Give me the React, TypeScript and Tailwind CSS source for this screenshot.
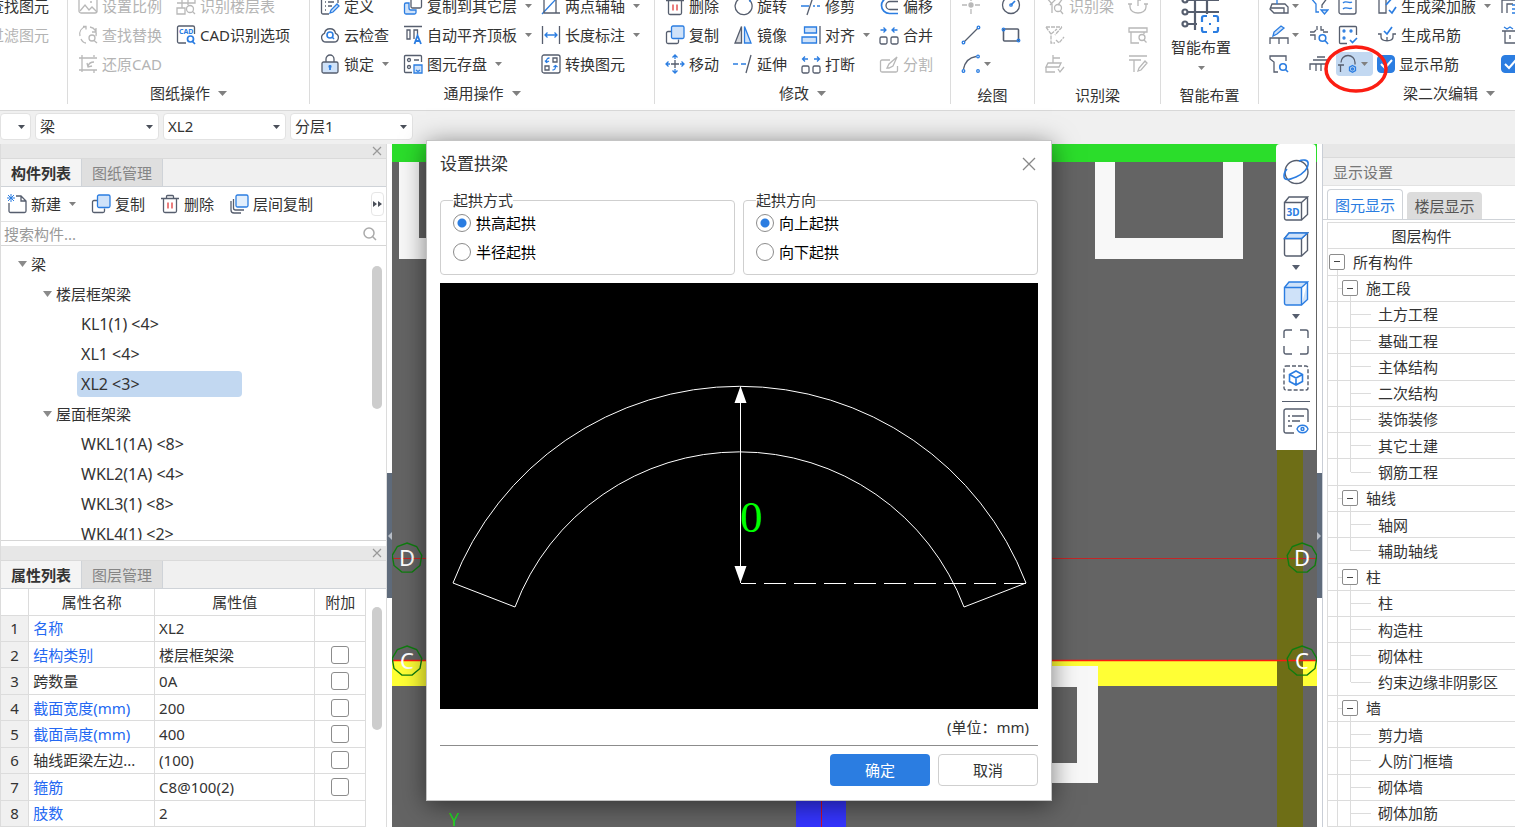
import React, { useState } from 'react';
import clsx from 'clsx';

const D = '#565e6e';
const B = '#2b7de1';
const L = '#cfe2f9';

// Every toolbar icon is drawn on a 20x20 grid
const icons: Record<string, React.ReactNode> = {
  scale: <><rect x="1" y="2" width="18" height="15" rx="2" /><path d="M2 15l5-6 4 5 3-3 5 5M12 6h2" /></>,
  floorTable: <><path d="M6 1v6H1M6 7h6V1h7v6h-7M1 12h8v6H1zM6 7v5M12 9V7" /><circle cx="14" cy="13" r="3.5" /><path d="M16.500 15.500L19 18" /></>,
  replace: <><path d="M8 1.500C3 3 1 7 2 11M3 14c1 2 3 4 5 4M12 2c5 1 7 5 6 9M5 1.500h3v3M18 3v4h-4" /><circle cx="14" cy="13" r="3" /><path d="M16 15.500L19 18" /></>,
  cadOption: <><path d="M10 18H3a1.500 1.500 0 0 1-1.500-1.500v-14A1.500 1.500 0 0 1 3 1h14a1.500 1.500 0 0 1 1.500 1.500V9" /><text x="3" y="9" fontSize="7" fontWeight="700" fill={B} stroke="none">CAD</text><circle cx="14.500" cy="14" r="3" stroke={B} strokeWidth="1.700" /><path d="M16.500 16.500L19 19" stroke={B} strokeWidth="1.700" /></>,
  restore: <path d="M1 4h18M4 1v17M1 16h18M16 1v2M16 16v3M16 8c-3 0-5 1-6 4M9 9l1 4 4-1" />,
  define: <><path d="M9 18H3a1.500 1.500 0 0 1-1.500-1.500V2M18 2v5M5 6h1M8 6h6M5 10h1M8 10h4M5 14h1" /><path d="M10 17l1-3 6-6 2 2-6 6z" stroke={B} fill={L} /></>,
  cloud: <><path d="M6 17a4.500 4.500 0 0 1-1.500-8.700 5.600 5.600 0 0 1 11 0A4.500 4.500 0 0 1 14 17z" /><circle cx="10" cy="10" r="3" stroke={B} strokeWidth="1.600" /><path d="M12 12l2 2" stroke={B} strokeWidth="1.600" /></>,
  lock: <><path d="M6 8V5a4 4 0 0 1 8 0v3" /><rect x="2" y="8" width="16" height="11" rx="1.500" fill={L} /><path d="M10 11v5M8.500 12.500h3" stroke={B} strokeWidth="1.800" /></>,
  copyLayer: <><rect x="8" y="1" width="10.500" height="11" rx="1.500" /><path d="M6 7H3a1.500 1.500 0 0 0-1.500 1.500v8A1.500 1.500 0 0 0 3 18h8.500a1.500 1.500 0 0 0 1.500-1.500V14H8a2 2 0 0 1-2-2z" fill={L} stroke={B} /></>,
  alignTop: <><path d="M1 1.500h18M4 5h3v9H4zM11 14V5h3.500v5" /><path d="M11.500 19l3-8.500L18 19M12.500 16h4.500" stroke={B} strokeWidth="1.800" /></>,
  save: <><path d="M9 18.500H2.500a1 1 0 0 1-1-1v-15a1 1 0 0 1 1-1h15a1 1 0 0 1 1 1V8M11 6h5M11 12h0" /><circle cx="6" cy="6" r="1.500" /><circle cx="6" cy="13" r="1.500" /><path d="M11 11h8v8h-8zM13 16l2 1.500 2-1.500" stroke={B} fill={L} /></>,
  twoPoint: <><path d="M1 18L16 2" stroke={B} /><path d="M3 1v16h16M15 1v16" /></>,
  length: <><path d="M1.500 1v18M18.500 1v18" /><path d="M4 10h12M6.500 7.500L4 10l2.500 2.500M13.500 7.500L16 10l-2.500 2.500" stroke={B} /></>,
  convert: <><rect x="1" y="1" width="18" height="18" rx="2" /><path d="M12 4h4v4h-4zM4 12h4v4H4z" /><path d="M8.500 4C6 4 5.500 5 5.500 8M4 6.500L5.500 8.500 8 7M11.500 16c2.500 0 3-1 3-4M12.500 13l2-1.500L16.500 13" stroke={B} /></>,
  trash: <><path d="M1 4.500h18M6.500 4.500V2.500a1 1 0 0 1 1-1h5a1 1 0 0 1 1 1v2M3.500 4.500V17A1.500 1.500 0 0 0 5 18.500h10a1.500 1.500 0 0 0 1.500-1.500V4.500" /><path d="M8 8.500v6M12 8.500v6" stroke="#e03a3a" /></>,
  copy: <><path d="M6 6.500H3A1.500 1.500 0 0 0 1.500 8v9A1.500 1.500 0 0 0 3 18.500h9a1.500 1.500 0 0 0 1.500-1.500v-2.500" /><rect x="6.500" y="1" width="12.500" height="12.500" rx="1.500" fill={L} stroke={B} /></>,
  move: <><path d="M10 6v8M6 10h8" /><path d="M7.500 3.500L10 1l2.500 2.500M10 1v4M7.500 16.500L10 19l2.500-2.500M10 19v-4M3.500 7.500L1 10l2.500 2.500M1 10h4M16.500 7.500L19 10l-2.500 2.500M19 10h-4" stroke={B} /></>,
  rotate: <><path d="M13 2a8.500 8.500 0 1 1-7 1" /><path d="M13 2h4v4" stroke={B} /></>,
  mirror: <><path d="M8.500 1.500V18H2z" fill="#d8dade" /><path d="M11.500 1.500V18H18z" fill={L} stroke={B} /></>,
  extend: <><path d="M13 19l5-18" /><path d="M0 10h5M8 10h5" stroke={B} strokeWidth="1.600" /></>,
  trim: <><path d="M6 19l6-18" /><path d="M0 10h8M12 10h2M16 10h3" stroke={B} strokeWidth="1.600" /></>,
  align: <><path d="M19 1v18" /><path d="M3.500 2h12v6h-12zM1 12h14.500v6H1z" fill={L} stroke={B} /></>,
  breakIt: <><rect x="1" y="12" width="7" height="7" rx="1.500" /><rect x="12" y="12" width="7" height="7" rx="1.500" /><path d="M7 5H2M4 2.500L1.500 5 4 7.500M13 5h5M16 2.500L18.500 5 16 7.500" stroke={B} /></>,
  merge: <><rect x="1" y="12" width="7" height="7" rx="1.500" /><rect x="12" y="12" width="7" height="7" rx="1.500" /><path d="M1.500 5H7M4.500 2.500L7 5 4.500 7.500M18.500 5H13M15.500 2.500L13 5l2.500 2.500" stroke={B} /></>,
  offset: <><path d="M19 1.500h-8.500a8 8 0 0 0 0 16H19" stroke={B} strokeWidth="1.700" /><path d="M19 5.500h-8a4 4 0 0 0 0 8h8" /></>,
  split: <><path d="M11 6H3a1.500 1.500 0 0 0-1.500 1.500v9A1.500 1.500 0 0 0 3 18h14a1.500 1.500 0 0 0 1.500-1.500V12M8 14l2-4 8-7-4 9-4 2z" /></>,
  point: <><path d="M1 9h5M14 9h5M10 1v4M10 13v5" /><circle cx="10" cy="9" r="2" fill="#b8b8b8" /></>,
  circle: <><circle cx="10" cy="9" r="8.500" /><path d="M10 9l4-4" stroke={B} strokeWidth="1.700" /><circle cx="10" cy="9" r="1.200" stroke={B} /></>,
  line: <><path d="M3 17L17 3" /><circle cx="2.500" cy="17.500" r="1.300" stroke={B} /><circle cx="17.500" cy="2.500" r="1.300" stroke={B} /></>,
  rect: <><rect x="2.500" y="4" width="15" height="12" rx="1" strokeWidth="1.600" /><circle cx="2.500" cy="4.500" r="1.300" stroke={B} /><circle cx="17.500" cy="15.500" r="1.300" stroke={B} /></>,
  arc: <><path d="M2.500 15C4 8 8 3.500 15 2.500" /><circle cx="2.500" cy="17" r="1.300" stroke={B} /><circle cx="17" cy="2.500" r="1.300" stroke={B} /><circle cx="17" cy="17" r="1.300" stroke={B} /></>,
  beamFind: <><path d="M1 1l6 7v9M6 2h12l-5 7v0M5 9l7-7" /><circle cx="13" cy="12" r="3.500" /><path d="M15.500 15L18 18" /></>,
  beamCheck: <><path d="M1 2h16M1 2l5 7v9h4M17 2l-7 8M6 9l6-5M11 15l3 3 5-6" strokeDasharray="4 1" /></>,
  beamStack: <><path d="M8 1v8M8 4h7M3 9h13l-2 4H1zM1 13v5h9M13 15l2 3 4-5" /></>,
  hook: <><path d="M10 1v9M10 4h3M2 8v3c0 8 16 8 16 0V8M0 8h4M16 8h4" /></>,
  panelFind: <><path d="M1 3h18v4H1zM3 7v11h8M16 7v2" /><circle cx="14" cy="12.500" r="3" /><path d="M16 15l2.500 2.500" /></>,
  panelEdit: <><path d="M1 2h18M1 6h12M6 6v12M10 17l1-3 6-7 2 2-6 7z" /></>,
  box: <><path d="M3 8h13l3 3v6H5l-4-4zM2 12h13v5" /><path d="M8 8V1h7" stroke={B} /></>,
  pencilFrame: <><path d="M1 19v-6h18v6M10 13v6" /><path d="M4 11l1-4 7-6 3 2-7 6z" stroke={B} fill={L} /></>,
  pipeFind: <><path d="M17 7V2H1v3l4 3v10h4" /><circle cx="14" cy="13" r="3.300" stroke={B} strokeWidth="1.600" /><path d="M16.500 15.500L19 18" stroke={B} strokeWidth="1.600" /></>,
  funnel: <><path d="M1 1l6 7v8h3" stroke={B} /><path d="M8 1h11l-6 8v3" /><path d="M12 14h7l-3.500 4z" stroke={B} fill={L} /></>,
  cross: <><path d="M1 7h4l2-2M1 10h5v5M8 1v4M12 1v4h3M19 7h-5" /><circle cx="13.500" cy="13" r="3.300" stroke={B} strokeWidth="1.600" /><path d="M16 15.500L19 19" stroke={B} strokeWidth="1.600" /></>,
  roof: <path d="M4 6h15M1 16v-6h18M8 3h8M7 10v7M12 10v7" />,
  waves: <><rect x="1" y="1" width="17" height="17" rx="2" /><path d="M5 7c3-3 6 1 9-1M5 13c3-3 6 1 9-1" stroke={B} /></>,
  dots: <><path d="M9 18.500H2.500a1 1 0 0 1-1-1v-15a1 1 0 0 1 1-1h15a1 1 0 0 1 1 1V10" /><circle cx="6" cy="6" r="1" stroke={B} /><circle cx="13" cy="6" r="1" stroke={B} /><circle cx="6" cy="13" r="1" stroke={B} /><path d="M12 15l2.500 2.500L19 13" stroke={B} strokeWidth="1.700" /></>,
  archBeam: <><path d="M4 8.500a7 7 0 0 1 14 0v2M1 11h6M3.500 11v7" /><path d="M15.500 11.500l3 1.700v3.400l-3 1.700-3-1.700v-3.400z" stroke={B} /><circle cx="15.500" cy="15" r="1" stroke={B} /></>,
  haunch: <><path d="M1 1h16M2 1v16h7V1" /><path d="M9 9l7-8M12 14l3 3 4-6" stroke={B} strokeWidth="1.700" /></>,
  hanger: <><path d="M1 9h3v3c0 5 12 5 12 0V9h3M10 12v4" /><path d="M7 6l3 3 5-7" stroke={B} strokeWidth="1.700" /></>,
  frame: <><path d="M1 17V4h18M6 17V8h6" /><path d="M11 9h8M11 13h8M11 17h8" stroke={B} /></>,
  comb: <><path d="M1 6h18M4 6v12h10M9 10v4" /><path d="M3 2l3 2 3-2 3 2" stroke={B} /></>,
  newDoc: <><path d="M9 2h5l5 5v10a1.500 1.500 0 0 1-1.500 1.500h-14A1.500 1.500 0 0 1 2 17V9M14 2v5h5" /><path d="M1 1l6 6M7 1L1 7M4 0v8M0 4h8" stroke={B} strokeWidth="1" /></>,
  layers: <><path d="M2 7v9a3 3 0 0 0 3 3h7M4.500 5v9a2 2 0 0 0 2 2H15" /><rect x="7" y="1" width="12" height="12" rx="1.500" fill="#e3effc" stroke={B} /></>,
};

const Icon = ({ name, muted }: { name: string; muted?: boolean }) => (
  <svg
    width="20"
    height="20"
    viewBox="0 0 20 20"
    fill="none"
    stroke={muted ? '#b8b8b8' : D}
    strokeWidth="1.3"
    className="shrink-0"
  >
    {icons[name]}
  </svg>
);

const Caret = ({ className = 'text-[#808080]' }: { className?: string }) => (
  <svg width="7" height="4" viewBox="0 0 7 4" className={clsx('shrink-0', className)}>
    <path d="M0 0h7L3.500 4z" fill="currentColor" />
  </svg>
);

type ToolProps = { icon: string; label?: string; arrow?: boolean; muted?: boolean; title?: string };

const Tool = ({ icon, label, arrow, muted, title }: ToolProps) => (
  <button
    type="button"
    aria-label={label ?? title ?? icon}
    className={clsx(
      'flex h-[29px] items-center whitespace-nowrap hover:bg-[#eef4fc]',
      label ? 'gap-1' : 'gap-[3px]',
      muted ? 'text-[#b4b4b4]' : 'text-[#333]'
    )}
  >
    <Icon name={icon} muted={muted} />
    {label}
    {arrow && <span className={label ? 'pl-1' : ''}><Caret /></span>}
  </button>
);

const Group = ({ title, arrow, className, children }: { title?: string; arrow?: boolean; className: string; children: React.ReactNode }) => (
  <section className={clsx('flex shrink-0 flex-col justify-end', className)}>
    <div className="flex shrink-0 items-end pl-[10px]">{children}</div>
    <div className={clsx('flex h-[30px] shrink-0 items-center justify-center gap-2', title && !arrow && 'pt-1')}>
      {title}
      {arrow && (
        <svg width="9" height="5" viewBox="0 0 9 5"><path d="M0 0h9L4.500 5z" fill="#808080" /></svg>
      )}
    </div>
  </section>
);

const Divider = () => <div className="mb-1 w-px shrink-0 bg-[#dcdcdc]" />;

const Column = ({ tools, className }: { tools: ToolProps[]; className?: string }) => (
  <div className={clsx('flex shrink-0 flex-col items-start', className)}>
    {tools.map((t, i) => <Tool key={i} {...t} />)}
  </div>
);

const BlueCheck = ({ label, title }: { label?: string; title?: string }) => {
  const [on, setOn] = useState(true);
  return (
    <label className="flex h-[29px] items-center gap-1 whitespace-nowrap">
      <span className="grid shrink-0">
        <input
          type="checkbox"
          aria-label={title}
          checked={on}
          onChange={() => setOn(!on)}
          className="col-start-1 row-start-1 size-[18px] appearance-none rounded-sm border border-[#2b7de1] checked:bg-[#2b7de1]"
        />
        <svg viewBox="0 0 18 18" className="pointer-events-none col-start-1 row-start-1 size-[18px]">
          <path d="M4 9l4 4 7-8" fill="none" stroke="#fff" strokeWidth="2" />
        </svg>
      </span>
      {label}
    </label>
  );
};

const Ribbon = () => (
  <header className="flex h-[111px] shrink-0 overflow-hidden border-b border-[#d8d8d8] bg-white pb-[2px]">
    <Group className="w-[67px]">
      <div className="flex w-full flex-col items-end pr-[18px] pb-[29px]">
        <button type="button" className="h-[29px] whitespace-nowrap">查找图元</button>
        <button type="button" className="h-[29px] whitespace-nowrap text-[#b4b4b4]">过滤图元</button>
      </div>
    </Group>
    <Divider />
    <Group title="图纸操作" arrow className="w-[241px]">
      <Column
        className="w-[98px]"
        tools={[
          { icon: 'scale', label: '设置比例', muted: true },
          { icon: 'replace', label: '查找替换', muted: true },
          { icon: 'restore', label: '还原CAD', muted: true },
        ]}
      />
      <Column
        className="pb-[29px]"
        tools={[
          { icon: 'floorTable', label: '识别楼层表', muted: true },
          { icon: 'cadOption', label: 'CAD识别选项' },
        ]}
      />
    </Group>
    <Divider />
    <Group title="通用操作" arrow className="w-[344px]">
      <Column
        className="w-[83px]"
        tools={[
          { icon: 'define', label: '定义' },
          { icon: 'cloud', label: '云检查' },
          { icon: 'lock', label: '锁定', arrow: true },
        ]}
      />
      <Column
        className="w-[138px]"
        tools={[
          { icon: 'copyLayer', label: '复制到其它层', arrow: true },
          { icon: 'alignTop', label: '自动平齐顶板', arrow: true },
          { icon: 'save', label: '图元存盘', arrow: true },
        ]}
      />
      <Column
        tools={[
          { icon: 'twoPoint', label: '两点辅轴', arrow: true },
          { icon: 'length', label: '长度标注', arrow: true },
          { icon: 'convert', label: '转换图元' },
        ]}
      />
    </Group>
    <Divider />
    <Group title="修改" arrow className="w-[295px]">
      <Column
        className="w-[68px]"
        tools={[
          { icon: 'trash', label: '删除' },
          { icon: 'copy', label: '复制' },
          { icon: 'move', label: '移动' },
        ]}
      />
      <Column
        className="w-[68px]"
        tools={[
          { icon: 'rotate', label: '旋转' },
          { icon: 'mirror', label: '镜像' },
          { icon: 'extend', label: '延伸' },
        ]}
      />
      <Column
        className="w-[78px]"
        tools={[
          { icon: 'trim', label: '修剪' },
          { icon: 'align', label: '对齐', arrow: true },
          { icon: 'breakIt', label: '打断' },
        ]}
      />
      <Column
        tools={[
          { icon: 'offset', label: '偏移' },
          { icon: 'merge', label: '合并' },
          { icon: 'split', label: '分割', muted: true },
        ]}
      />
    </Group>
    <Divider />
    <Group title="绘图" className="w-[83px]">
      <Column
        className="w-10"
        tools={[
          { icon: 'point', title: '点', muted: true },
          { icon: 'line', title: '直线' },
          { icon: 'arc', title: '弧线', arrow: true },
        ]}
      />
      <Column
        className="pb-[29px]"
        tools={[
          { icon: 'circle', title: '圆' },
          { icon: 'rect', title: '矩形' },
        ]}
      />
    </Group>
    <Divider />
    <Group title="识别梁" className="w-[125px]">
      <Column
        className="w-[83px]"
        tools={[
          { icon: 'beamFind', label: '识别梁', muted: true },
          { icon: 'beamCheck', title: '校核梁图元', muted: true },
          { icon: 'beamStack', title: '编辑支座', muted: true },
        ]}
      />
      <Column
        tools={[
          { icon: 'hook', title: '识别吊筋', muted: true },
          { icon: 'panelFind', title: '校核原位标注', muted: true },
          { icon: 'panelEdit', title: '识别原位标注', muted: true },
        ]}
      />
    </Group>
    <Divider />
    <Group title="智能布置" className="w-[97px]">
      <button type="button" className="flex flex-col items-center pb-2">
        <svg width="40" height="40" viewBox="0 0 40 40" fill="none" stroke={D} strokeWidth="2.200">
          <path d="M6 6h32M6 18h32M6 30h10M14 0v36M26 0v20M36 0v6" />
          <circle cx="4" cy="6" r="2.500" />
          <circle cx="4" cy="18" r="2.500" />
          <circle cx="4" cy="30" r="2.500" />
          <path d="M21 28v-4a2 2 0 0 1 2-2h3M32 22h3a2 2 0 0 1 2 2v4M37 33v3a2 2 0 0 1-2 2h-3M26 38h-3a2 2 0 0 1-2-2v-3M28 30h2" stroke={B} />
        </svg>
        <span className="h-8 leading-[26px]">智能布置</span>
        <Caret />
      </button>
    </Group>
    <Divider />
    <Group title="梁二次编辑" arrow className="w-[380px]">
      <Column
        className="w-10"
        tools={[
          { icon: 'box', title: '重提梁跨', arrow: true },
          { icon: 'pencilFrame', title: '原位标注', arrow: true },
          { icon: 'pipeFind', title: '查改标高' },
        ]}
      />
      <Column
        className="w-[27px]"
        tools={[
          { icon: 'funnel', title: '应用同名梁' },
          { icon: 'cross', title: '校核' },
          { icon: 'roof', title: '梁跨分类' },
        ]}
      />
      <div className="relative w-[41px] shrink-0">
        <div className="flex flex-col items-start pl-[2px]">
          <Tool icon="waves" title="刷新支座" />
          <Tool icon="dots" title="查改" />
        </div>
        <div className="flex h-[29px] items-center">
          <button type="button" aria-label="设置拱梁" className="flex h-6 w-[37px] items-center gap-1 rounded-sm bg-[#c2d8f1] pl-px">
            <Icon name="archBeam" />
            <Caret />
          </button>
        </div>
        <svg width="66" height="50" viewBox="0 0 66 50" className="pointer-events-none absolute -right-3 -bottom-4">
          <ellipse cx="33" cy="25" rx="30" ry="22" fill="none" stroke="#fb1d12" strokeWidth="3.500" />
        </svg>
      </div>
      <div className="flex w-[124px] shrink-0 flex-col items-start">
        <Tool icon="haunch" label="生成梁加腋" arrow />
        <Tool icon="hanger" label="生成吊筋" />
        <BlueCheck label="显示吊筋" />
      </div>
      <div className="flex shrink-0 flex-col items-start">
        <Tool icon="frame" title="生成架立筋" />
        <Tool icon="comb" title="生成侧面筋" />
        <BlueCheck title="显示加腋" />
      </div>
    </Group>
  </header>
);

const Picker = ({ label, value, className }: { label: string; value: string; className: string }) => (
  <div className={clsx('relative shrink-0', className)}>
    <select aria-label={label} className="h-[27px] w-full appearance-none rounded border border-[#e2e2e2] bg-white pb-px pl-1 outline-none">
      <option>{value}</option>
    </select>
    <span className="pointer-events-none absolute top-3 right-[6px]"><Caret className="text-[#4a4f59]" /></span>
  </div>
);

const PanelStrip = () => (
  <div className="flex h-[15px] shrink-0 items-center justify-end border-b border-[#dadada] bg-[#e7e7e7] pr-1">
    <button type="button" aria-label="关闭">
      <svg width="10" height="10" viewBox="0 0 10 10"><path d="M1 1l8 8M9 1L1 9" stroke="#999" strokeWidth="1.200" /></svg>
    </button>
  </div>
);

const PanelTabs = ({ tabs }: { tabs: string[] }) => (
  <div role="tablist" className="flex h-7 shrink-0 border-b border-[#cfd3d8] bg-[#f0f0f0]">
    {tabs.map((tab, i) => (
      <button
        key={tab}
        type="button"
        role="tab"
        aria-selected={i === 0}
        className={clsx(
          'w-[81px] border-r border-[#cfd3d8]',
          i === 0 ? 'bg-[#f4f4f4] font-bold text-[#333]' : 'bg-[#dfdfdf] text-[#858585]'
        )}
      >
        {tab}
      </button>
    ))}
  </div>
);

const components = [
  { name: '楼层框架梁', items: ['KL1(1) <4>', 'XL1 <4>', 'XL2 <3>'] },
  { name: '屋面框架梁', items: ['WKL1(1A) <8>', 'WKL2(1A) <4>', 'WKL3(1) <8>', 'WKL4(1) <2>'] },
];

const TreeCaret = () => (
  <svg width="9" height="6" viewBox="0 0 9 6"><path d="M0 0h9L4.500 6z" fill="#8a8a8a" /></svg>
);

const ComponentPanel = () => {
  const [selected, setSelected] = useState('XL2 <3>');
  return (
    <section className="flex min-h-0 flex-[400] flex-col pb-[5px]">
      <PanelStrip />
      <PanelTabs tabs={['构件列表', '图纸管理']} />
      <div className="flex h-[35px] shrink-0 items-center gap-[15px] border-b border-[#e2e2e2] pl-[6px]">
        <Tool icon="newDoc" label="新建" arrow />
        <Tool icon="copy" label="复制" />
        <Tool icon="trash" label="删除" />
        <Tool icon="layers" label="层间复制" />
        <button type="button" aria-label="更多" className="mr-[2px] ml-auto flex h-6 w-[13px] items-center justify-center rounded border border-[#e6e6e6]">
          <svg width="9" height="6" viewBox="0 0 9 6"><path d="M0 0l4 3-4 3zM5 0l4 3-4 3z" fill="#4a4f59" /></svg>
        </button>
      </div>
      <label className="flex h-6 shrink-0 items-center border-b border-[#d6d6d6] pr-[9px] pl-[3px]">
        <input type="text" placeholder="搜索构件..." aria-label="搜索构件" className="min-w-0 flex-1 outline-none placeholder:text-[#999]" />
        <svg width="14" height="14" viewBox="0 0 14 14" fill="none" stroke="#aaa" strokeWidth="1.500">
          <circle cx="6" cy="6" r="5" /><path d="M9.500 9.500L13 13" />
        </svg>
      </label>
      <div className="flex min-h-0 flex-1 overflow-hidden border-b border-[#d6d6d6]">
        <div className="flex-1 pt-[3px]">
          <div className="flex h-[30px] items-center gap-1 pl-[17px]"><TreeCaret />梁</div>
          {components.map((group) => (
            <div key={group.name}>
              <div className="flex h-[30px] items-center gap-1 pl-[42px]"><TreeCaret />{group.name}</div>
              {group.items.map((item) => (
                <div key={item} className="flex h-[30px] items-center pl-[76px]">
                  <button
                    type="button"
                    onClick={() => setSelected(item)}
                    className={clsx('h-[26px] w-[165px] rounded-sm pl-1 text-left text-base', item === selected && 'bg-[#c2d8f1]')}
                  >
                    {item}
                  </button>
                </div>
              ))}
            </div>
          ))}
        </div>
        <div className="w-[14px] pt-5"><div className="h-[143px] w-[10px] rounded-full bg-[#cdcdcd]" /></div>
      </div>
    </section>
  );
};

const properties = [
  { name: '名称', value: 'XL2', blue: true },
  { name: '结构类别', value: '楼层框架梁', blue: true, extra: true },
  { name: '跨数量', value: '0A', extra: true },
  { name: '截面宽度(mm)', value: '200', blue: true, extra: true },
  { name: '截面高度(mm)', value: '400', blue: true, extra: true },
  { name: '轴线距梁左边...', value: '(100)', extra: true },
  { name: '箍筋', value: 'C8@100(2)', blue: true, extra: true },
  { name: '肢数', value: '2', blue: true },
];

const PropertyPanel = () => (
  <section className="flex min-h-0 flex-[283] flex-col">
    <PanelStrip />
    <PanelTabs tabs={['属性列表', '图层管理']} />
    <div className="flex min-h-0 flex-1">
      <table className="h-full flex-1 table-fixed border-collapse">
        <thead>
          <tr className="h-[26px] border-b border-[#dcdcdc]">
            <th className="w-[28px] border-r border-[#dcdcdc]" />
            <th className="w-[126px] border-r border-[#dcdcdc] font-normal">属性名称</th>
            <th className="w-[161px] border-r border-[#dcdcdc] font-normal">属性值</th>
            <th className="w-[51px] border-r border-[#dcdcdc] font-normal">附加</th>
          </tr>
        </thead>
        <tbody>
          {properties.map((p, i) => (
            <tr key={p.name} className="h-[26px] border-b border-[#dcdcdc]">
              <td className="border-r border-[#dcdcdc] bg-[#f0f0f0] p-0 text-center">{i + 1}</td>
              <td className={clsx('border-r border-[#dcdcdc] p-0 pl-1 whitespace-nowrap', p.blue && 'text-[#2468f2]')}>{p.name}</td>
              <td className="border-r border-[#dcdcdc] p-0 pl-1">{p.value}</td>
              <td className="border-r border-[#dcdcdc] p-0">
                {p.extra && (
                  <input
                    type="checkbox"
                    aria-label={`附加 ${p.name}`}
                    className="mx-auto block size-[18px] appearance-none rounded-[3px] border border-[#8c8c8c] bg-white checked:bg-[#2b7de1]"
                  />
                )}
              </td>
            </tr>
          ))}
        </tbody>
      </table>
      <div className="w-5 shrink-0 pt-[18px] pl-[6px]"><div className="h-[123px] w-[10px] rounded-full bg-[#cdcdcd]" /></div>
    </div>
  </section>
);

const Splitter = ({ right }: { right?: boolean }) => (
  <div className="flex w-[5px] shrink-0 flex-col bg-white">
    <div className="flex-[329]" />
    <button type="button" aria-label="折叠面板" className="flex flex-[125] items-center bg-[#5f6b7b]">
      <svg width="5" height="8" viewBox="0 0 5 8"><path d={right ? 'M0 0l4 4-4 4z' : 'M5 0L1 4l4 4z'} fill="#b9bfc8" /></svg>
    </button>
    <div className="flex-[229]" />
  </div>
);

const AxisMark = ({ x, y, label }: { x: number; y: number; label: string }) => (
  <g>
    <polygon
      points="0,-15 9.600,-11.500 14.800,-2.600 13,7.500 5.100,14.100 -5.100,14.100 -13,7.500 -14.800,-2.600 -9.600,-11.500"
      transform={`translate(${x} ${y})`}
      fill="none"
      stroke="#0f7d0f"
      strokeWidth="1.400"
    />
    <text x={x} y={y + 8} textAnchor="middle" fontSize="22" fill="#fff">{label}</text>
  </g>
);

const Scene = () => (
  <svg viewBox="392 144 925 683" preserveAspectRatio="xMidYMid slice" className="h-full w-full">
    <rect x="392" y="144" width="925" height="683" fill="#646464" />
    <path d="M399 161h20v77h109v-77h20v98H399zM1095 161h20v77h108v-77h20v98h-148z" fill="#f8f8f8" />
    <rect x="392" y="144" width="925" height="18" fill="#2bdd2b" />
    <rect x="392" y="661" width="925" height="25" fill="#ffff35" />
    <path d="M940 666h158v117H940zM960 687v76h117v-76z" fillRule="evenodd" fill="#f8f8f8" />
    <rect x="1277" y="450" width="26" height="377" fill="#6e6e16" />
    <path d="M392 558.500h925" stroke="#c42626" />
    <path d="M392 660.500h925" stroke="#ff1a10" strokeWidth="1.500" />
    <rect x="796" y="790" width="50" height="37" fill="#3535ff" />
    <path d="M821.500 790v37" stroke="#d0102a" />
    <text x="449" y="826" fontSize="18" fill="#1fd81f">Y</text>
    <AxisMark x={407} y={558} label="D" />
    <AxisMark x={407} y={661} label="C" />
    <AxisMark x={1302} y={558} label="D" />
    <AxisMark x={1302} y={661} label="C" />
  </svg>
);

const cubePath = 'M1.500 7.500h17v17.500h-15a2 2 0 0 1-2-2zM1.500 7.500L6 2h18.500l-6 5.500M24.500 2v17.500l-6 5.500';

const viewIcons: { label: string; caret?: boolean; art: React.ReactNode }[] = [
  { label: '动态观察', art: <><circle cx="13.500" cy="13" r="11.500" /><path d="M16 2c4-2 9-1 9 2 1 5-5 11-12 14S1 22 1 17c0-3 1-5 3-7" stroke={B} strokeWidth="1.600" /></> },
  { label: '三维', art: <><path d={cubePath} /><text x="3.500" y="21" fontSize="10" fontWeight="700" fill={B} stroke="none">3D</text></> },
  { label: '俯视', caret: true, art: <><path d={cubePath} /><path d="M1.500 7.500L6 2h18.500l-6 5.500z" fill={L} stroke={B} /></> },
  { label: '实体', caret: true, art: <path d={cubePath} fill={L} stroke={B} /> },
  { label: '全屏', art: <path d="M1 9V3a2 2 0 0 1 2-2h6M17 1h6a2 2 0 0 1 2 2v6M25 17v6a2 2 0 0 1-2 2h-6M9 25H3a2 2 0 0 1-2-2v-6" /> },
  { label: '局部三维', art: <><rect x="1" y="1" width="24" height="24" rx="2" strokeDasharray="4 2" /><path d="M13 6l6.500 3.500v7L13 20l-6.500-3.500v-7zM6.500 9.500L13 13l6.500-3.500M13 13v7" stroke={B} strokeWidth="1.600" /></> },
];

const ViewBar = () => (
  <div className="absolute top-0 right-px flex w-10 flex-col items-center rounded-t bg-white pt-[15px] pb-4">
    {viewIcons.map((v) => (
      <button key={v.label} type="button" aria-label={v.label} className="mb-[10px] flex flex-col items-center gap-2">
        <svg width="26" height="26" viewBox="0 0 26 26" fill="none" stroke={D} strokeWidth="1.400">{v.art}</svg>
        {v.caret && <svg width="8" height="5" viewBox="0 0 8 5"><path d="M0 0h8L4 5z" fill={D} /></svg>}
      </button>
    ))}
    <div className="mb-[6px] h-px w-7 bg-[#565e6e]" />
    <button type="button" aria-label="显示设置">
      <svg width="26" height="26" viewBox="0 0 26 26" fill="none" stroke={D} strokeWidth="1.400">
        <path d="M11 25H3a2 2 0 0 1-2-2V3a2 2 0 0 1 2-2h20a2 2 0 0 1 2 2v11M5 8h2M9 8h12M5 13h2M9 13h8M5 18h4" />
        <path d="M14 21c2-5 9-5 11 0-2 5-9 5-11 0z" stroke={B} />
        <circle cx="19.500" cy="21" r="1.500" stroke={B} />
      </svg>
    </button>
  </div>
);

const layers = [
  { name: '施工段', items: ['土方工程', '基础工程', '主体结构', '二次结构', '装饰装修', '其它土建', '钢筋工程'] },
  { name: '轴线', items: ['轴网', '辅助轴线'] },
  { name: '柱', items: ['柱', '构造柱', '砌体柱', '约束边缘非阴影区'] },
  { name: '墙', items: ['剪力墙', '人防门框墙', '砌体墙', '砌体加筋'], open: true },
];

const Toggle = ({ label }: { label: string }) => (
  <span className="flex w-4 flex-col items-center self-stretch">
    <span className="flex-1" />
    <button type="button" aria-label={`折叠 ${label}`} className="flex size-4 items-center justify-center rounded-[2px] border border-[#8c8c8c] bg-white">
      <span className="h-px w-[6px] bg-[#444]" />
    </button>
    <span className="w-px flex-1 bg-[#dcdcdc]" />
  </span>
);

const DisplayPanel = () => (
  <aside className="flex w-[193px] shrink-0 flex-col overflow-hidden border-l border-[#c9ced6] bg-white">
    <div className="h-[14px] shrink-0 border-b border-[#dadada] bg-[#e7e7e7]" />
    <h2 className="flex h-7 shrink-0 items-center border-b border-[#e2e2e2] bg-[#f0f0f0] pl-[10px] text-[#777]">显示设置</h2>
    <div role="tablist" className="flex h-[34px] shrink-0 items-end gap-1 border-b border-[#cfd3d8] pl-1">
      <button type="button" role="tab" aria-selected="true" className="h-[30px] w-[76px] rounded-t border border-b-0 border-[#cfd3d8] bg-white text-[#2b7de1]">图元显示</button>
      <button type="button" role="tab" aria-selected="false" className="h-[27px] w-[75px] rounded-t bg-[#dcdcdc] text-[#555]">楼层显示</button>
    </div>
    <div className="mt-[2px] ml-1 flex min-h-0 flex-1 flex-col border-t border-l border-[#dcdcdc]">
      <div className="flex min-h-0 flex-1 items-center justify-center border-b border-[#dcdcdc]">图层构件</div>
      <div className="flex min-h-0 flex-1 items-center gap-2 border-b border-[#dcdcdc] pl-px">
        <Toggle label="所有构件" />所有构件
      </div>
      {layers.map((layer) => (
        <React.Fragment key={layer.name}>
          <div className="flex min-h-0 flex-1 items-center border-b border-[#dcdcdc] pl-[9px]">
            <span className="flex w-[5px] items-center self-stretch border-l border-[#dcdcdc]">
              <span className="h-px w-full bg-[#dcdcdc]" />
            </span>
            <Toggle label={layer.name} />
            <span className="pl-2">{layer.name}</span>
          </div>
          {layer.items.map((item, i) => (
            <div key={item} className="flex min-h-0 flex-1 items-center border-b border-[#dcdcdc] pl-[9px] whitespace-nowrap">
              <span className="w-[13px] shrink-0 self-stretch border-l border-[#dcdcdc]" />
              <span className={clsx('w-px shrink-0 self-start bg-[#dcdcdc]', i === layer.items.length - 1 && !layer.open ? 'h-1/2' : 'h-full')} />
              <span className="h-px w-5 shrink-0 bg-[#dcdcdc]" />
              <span className="pl-[7px]">{item}</span>
            </div>
          ))}
        </React.Fragment>
      ))}
    </div>
  </aside>
);

const RadioBox = ({ legend, name, options }: { legend: string; name: string; options: string[] }) => {
  const [value, setValue] = useState(options[0]);
  return (
    <fieldset className="flex-1 rounded border border-[#cfcfcf] px-3 pb-2 text-black">
      <legend className="leading-4 text-[#333]">{legend}</legend>
      {options.map((o) => (
        <label key={o} className="flex h-[29px] items-center gap-[5px]">
          <input
            type="radio"
            name={name}
            checked={o === value}
            onChange={() => setValue(o)}
            className="size-[18px] appearance-none rounded-full border border-[#8c8c8c] bg-white checked:bg-[radial-gradient(circle,#2b7de1_4px,transparent_5px)]"
          />
          {o}
        </label>
      ))}
    </fieldset>
  );
};

const ArchDialog = () => (
  <div role="dialog" aria-label="设置拱梁" className="absolute top-[140px] left-[426px] w-[626px] border border-[#c4c4c4] bg-white px-[13px] pb-[14px] shadow-[0_4px_24px_rgba(0,0,0,0.5)]">
    <div className="flex h-[46px] items-center justify-between pr-[2px] text-[17px]">
      <h1>设置拱梁</h1>
      <button type="button" aria-label="关闭">
        <svg width="14" height="14" viewBox="0 0 14 14"><path d="M1 1l12 12M13 1L1 13" stroke="#888" strokeWidth="1.300" /></svg>
      </button>
    </div>
    <div className="flex gap-2 pt-[5px]">
      <RadioBox legend="起拱方式" name="mode" options={['拱高起拱', '半径起拱']} />
      <RadioBox legend="起拱方向" name="direction" options={['向上起拱', '向下起拱']} />
    </div>
    <svg viewBox="0 0 598 426" className="mt-2 block w-full bg-black" fill="none" stroke="#fff">
      <path d="M75 324L13 300A307 307 0 0 1 586 300L524 324A240 240 0 0 0 75 324z" />
      <path d="M300.500 104v196" />
      <path d="M300.500 103l6 17h-12zM300.500 300l6-17h-12z" fill="#fff" stroke="none" />
      <path d="M301 300.500h285" strokeDasharray="22 8" strokeDashoffset="7" />
      <text x="300" y="249" fontSize="45" fill="#00ff00" stroke="none" fontFamily="Liberation Serif, serif">0</text>
    </svg>
    <p className="flex h-[37px] items-center justify-end border-b border-[#8c8c8c] pr-[9px]">(单位：mm)</p>
    <div className="flex justify-end gap-2 pt-2">
      <button type="button" className="h-8 w-[100px] rounded bg-[#2b7de1] text-white">确定</button>
      <button type="button" className="h-8 w-[100px] rounded border border-[#cfcfcf] bg-white">取消</button>
    </div>
  </div>
);

const App = () => (
  <div className="relative flex h-screen flex-col overflow-hidden bg-white font-['Noto_Sans','Noto_Sans_CJK_SC',sans-serif] text-[15px] leading-5 text-[#333]">
    <Ribbon />
    <div className="flex h-[33px] shrink-0 items-start gap-1 bg-[#f0f0f0] pt-[2px]">
      <Picker label="楼层" value="" className="w-[31px]" />
      <Picker label="构件类别" value="梁" className="w-[124px]" />
      <Picker label="构件" value="XL2" className="w-[123px]" />
      <Picker label="分层" value="分层1" className="w-[123px]" />
    </div>
    <main className="flex min-h-0 flex-1">
      <div className="flex w-[387px] shrink-0 flex-col border-x border-[#dcdcdc]">
        <ComponentPanel />
        <PropertyPanel />
      </div>
      <Splitter />
      <div className="relative min-w-0 flex-1 overflow-hidden">
        <Scene />
        <ViewBar />
      </div>
      <Splitter right />
      <DisplayPanel />
    </main>
    <ArchDialog />
  </div>
);

export default App;
